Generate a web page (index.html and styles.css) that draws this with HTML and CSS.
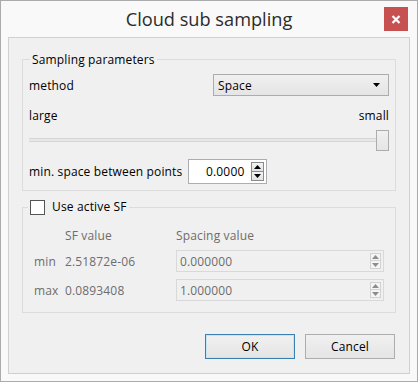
FILE: index.html
```html
<!DOCTYPE html>
<html>
<head>
<meta charset="utf-8">
<link rel="stylesheet" href="styles.css">
</head>
<body>
<div class="window">
  <div class="titlebar">
    <span></span>
    <div class="title">Cloud sub sampling</div>
    <div class="tb-right">
      <div class="close"><svg width="10" height="9" viewBox="0 0 10 9"><path d="M1.5 1 L8.5 8 M8.5 1 L1.5 8" stroke="#fff" stroke-width="2.2"/></svg></div>
    </div>
  </div>
  <div class="client">
    <fieldset class="group g1">
      <legend>Sampling parameters</legend>
      <div class="row method-row">
        <span>method</span>
        <div class="combo"><span>Space</span><svg width="7" height="4" viewBox="0 0 7 4"><path d="M0 0 H7 L3.5 4 Z" fill="#000"/></svg></div>
      </div>
      <div class="row scale-row"><span>large</span><span>small</span></div>
      <div class="slider"><div class="handle"></div></div>
      <div class="row spin-row">
        <span>min. space between points</span>
        <div class="spin">
          <span class="spin-val">0.0000</span>
          <div class="spin-btns">
            <div class="sb"><svg width="7" height="4" viewBox="0 0 7 4"><path d="M0 4 H7 L3.5 0 Z" fill="#000"/></svg></div>
            <div class="sb"><svg width="7" height="4" viewBox="0 0 7 4"><path d="M0 0 H7 L3.5 4 Z" fill="#000"/></svg></div>
          </div>
        </div>
      </div>
    </fieldset>
    <fieldset class="group g2">
      <legend><span class="check"></span><span class="check-label">Use active SF</span></legend>
      <div class="sfgrid">
        <span></span><span>SF value</span><span>Spacing value</span>
        <span>min</span><span>2.51872e-06</span>
        <div class="dspin"><span>0.000000</span><div class="dspin-btns"><div class="dsb"><svg width="7" height="4" viewBox="0 0 7 4"><path d="M0 4 H7 L3.5 0 Z" fill="#8c8c8c"/></svg></div><div class="dsb"><svg width="7" height="4" viewBox="0 0 7 4"><path d="M0 0 H7 L3.5 4 Z" fill="#8c8c8c"/></svg></div></div></div>
        <span>max</span><span>0.0893408</span>
        <div class="dspin"><span>1.000000</span><div class="dspin-btns"><div class="dsb"><svg width="7" height="4" viewBox="0 0 7 4"><path d="M0 4 H7 L3.5 0 Z" fill="#8c8c8c"/></svg></div><div class="dsb"><svg width="7" height="4" viewBox="0 0 7 4"><path d="M0 0 H7 L3.5 4 Z" fill="#8c8c8c"/></svg></div></div></div>
      </div>
    </fieldset>
    <div class="buttons">
      <div class="btn default">OK</div>
      <div class="btn">Cancel</div>
    </div>
  </div>
</div>
</body>
</html>
```
FILE: styles.css
```css
html, body { margin: 0; padding: 0; background: #fff; }
body { font-family: "Open Sans", "Noto Sans", sans-serif; font-size: 12px; letter-spacing: 0.15px; color: #000; }

.window {
  width: 418px; height: 382px; box-sizing: border-box;
  border: 1px solid #ababab; background: #f9f9f9;
  display: flex; flex-direction: column;
}
.titlebar {
  height: 36px; flex: none;
  display: grid; grid-template-columns: 1fr auto 1fr; align-items: start;
}
.title { font-size: 18.2px; letter-spacing: 0; line-height: 37px; color: #2b2b2b; white-space: nowrap; }
.tb-right { display: flex; justify-content: flex-end; padding: 6px 9px 0 0; }
.close {
  width: 24px; height: 24px; background: #c75050;
  display: flex; align-items: center; justify-content: center;
}

.client {
  flex: 1; margin: 0 7px 7px; border: 1px solid #d0d0d0; background: #f0f0f0;
  padding: 13px 13px 0; display: flex; flex-direction: column;
}

.group { margin: 0; min-width: 0; border: 1px solid #dcdcdc; padding: 6px 6px 6px 6px; }
.group legend { padding: 0 2px; margin-left: 1px; line-height: 17px; }

.row { display: flex; align-items: center; justify-content: space-between; }
.method-row { height: 22px; }
.combo {
  width: 176px; height: 22px; box-sizing: border-box;
  border: 1px solid #acacac; background: linear-gradient(#f0f0f0, #e5e5e5);
  display: flex; align-items: center; justify-content: space-between;
  padding: 0 8px 0 4px;
}
.scale-row { margin-top: 11px; height: 16px; }
.slider {
  margin-top: 7px; height: 21px; display: flex; justify-content: flex-end;
  background: linear-gradient(to bottom, transparent 8px, #d6d6d6 8px, #d6d6d6 9px, #e7e7e7 9px, #e7e7e7 11px, #d6d6d6 11px, #d6d6d6 12px, transparent 12px);
}
.handle {
  width: 13px; height: 21px; box-sizing: border-box;
  border: 1px solid #acacac; background: linear-gradient(#f0f0f0, #e5e5e5);
}
.spin-row { margin-top: 8px; height: 25px; justify-content: flex-start; }
.spin {
  margin-left: 6px; width: 79px; height: 25px; box-sizing: border-box;
  border: 1px solid #abadb3; background: #fff;
  display: flex; align-items: center; padding: 0 2px 0 0;
}
.spin-val { flex: 1; text-align: right; padding-right: 7px; }
.spin-btns { display: flex; flex-direction: column; gap: 0; }
.sb {
  width: 13px; height: 10px; box-sizing: border-box;
  border: 1px solid #8a8a8a; background: linear-gradient(#f4f4f4, #e2e2e2);
  display: flex; align-items: center; justify-content: center;
}
.sb + .sb { border-top: none; height: 9px; }

.g2 { margin-top: 8px; padding: 12px 6px 11px 6px; }
.g2 legend { margin-left: -1px; line-height: 16px; display: flex; align-items: center; }
.check {
  width: 15px; height: 15px; box-sizing: border-box;
  border: 1px solid #555; background: #fff; display: inline-block;
}
.check-label { margin-left: 7px; }

.sfgrid {
  margin-left: 5px; display: grid;
  grid-template-columns: 31px 111px 208px; grid-template-rows: 16px 22px 22px;
  row-gap: 7px; align-items: center; color: #6d6d6d;
}
.dspin {
  height: 22px; box-sizing: border-box; border: 1px solid #d9d9d9; background: #f0f0f0;
  display: flex; align-items: center; justify-content: space-between; padding: 0 2px 0 3px;
}
.dspin-btns { display: flex; flex-direction: column; }
.dsb {
  width: 11px; height: 8px; box-sizing: border-box;
  border: 1px solid #d2d2d2; background: #f4f4f4;
  display: flex; align-items: center; justify-content: center;
}
.dsb + .dsb { border-top: none; }

.buttons { display: flex; justify-content: flex-end; gap: 10px; margin-top: 21px; padding-right: 1px; }
.btn {
  width: 90px; height: 25px; box-sizing: border-box;
  border: 1px solid #adadad; background: linear-gradient(#f0f0f0, #e5e5e5);
  display: flex; align-items: center; justify-content: center;
}
.btn.default { border-color: #3c7fb1; box-shadow: inset 0 0 0 1px #c4e5f6; }
```
